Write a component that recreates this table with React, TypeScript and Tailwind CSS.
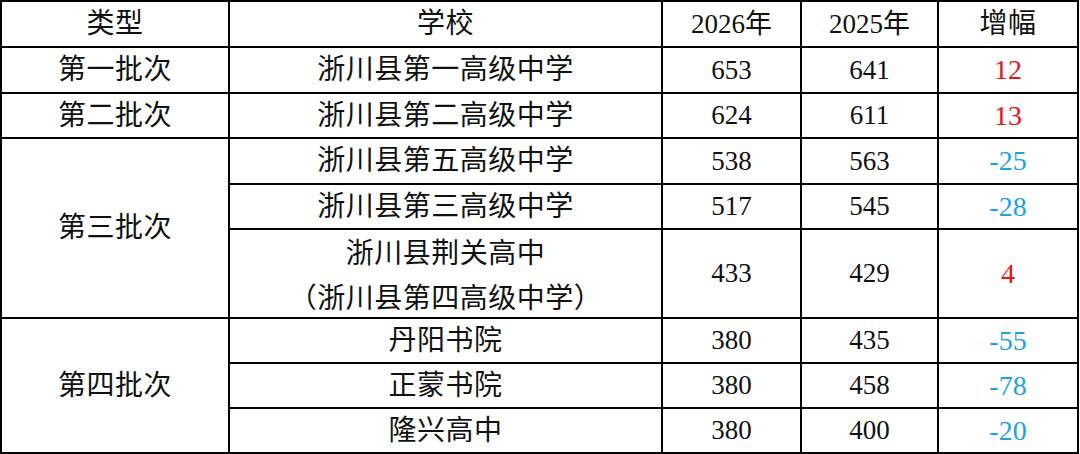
import React from "react";

type Row = { type?: string; span?: number; school: React.ReactNode; a: string; b: string; d: string; up: boolean };

const rows: Row[] = [
  { type: "第一批次", span: 1, school: "浙川县第一高级中学", a: "653", b: "641", d: "12", up: true },
  { type: "第二批次", span: 1, school: "浙川县第二高级中学", a: "624", b: "611", d: "13", up: true },
  { type: "第三批次", span: 3, school: "浙川县第五高级中学", a: "538", b: "563", d: "-25", up: false },
  { school: "浙川县第三高级中学", a: "517", b: "545", d: "-28", up: false },
  {
    school: (
      <span className="flex flex-col items-center leading-[45px] pt-[4px]">
        <span>浙川县荆关高中</span>
        <span>（浙川县第四高级中学）</span>
      </span>
    ),
    a: "433",
    b: "429",
    d: "4",
    up: true,
  },
  { type: "第四批次", span: 3, school: "丹阳书院", a: "380", b: "435", d: "-55", up: false },
  { school: "正蒙书院", a: "380", b: "458", d: "-78", up: false },
  { school: "隆兴高中", a: "380", b: "400", d: "-20", up: false },
];

const cell = "bg-white flex items-center justify-center text-[#111111]";
const cjk = "text-[28px] tracking-[0.5px]";

export default function App() {
  return (
    <div
      className="w-[1080px] h-[454px] bg-white"
      style={{ fontFamily: '"Liberation Serif", "Noto Sans CJK SC", serif' }}
    >
      <div className="grid w-[1079px] h-[454px] bg-black p-[2px] gap-[2px] grid-cols-[226px_431px_137px_135px_138px] grid-rows-[44px_44px_43px_44px_43px_87px_43px_43px_43px] text-[27px]">
        <div className={`${cell} ${cjk}`}>类型</div>
        <div className={`${cell} ${cjk}`}>学校</div>
        <div className={cell}>2026年</div>
        <div className={cell}>2025年</div>
        <div className={`${cell} ${cjk}`}>增幅</div>
        {rows.map((r, i) => (
          <React.Fragment key={i}>
            {r.type && (
              <div className={`${cell} ${cjk} ${r.span === 3 ? "row-span-3" : ""}`}>{r.type}</div>
            )}
            <div className={`${cell} ${cjk}`}>{r.school}</div>
            <div className={cell}>{r.a}</div>
            <div className={cell}>{r.b}</div>
            <div className={`${cell} text-[28px] ${r.up ? "!text-[#e5141d]" : "!text-[#22a2dd]"}`}>{r.d}</div>
          </React.Fragment>
        ))}
      </div>
    </div>
  );
}
